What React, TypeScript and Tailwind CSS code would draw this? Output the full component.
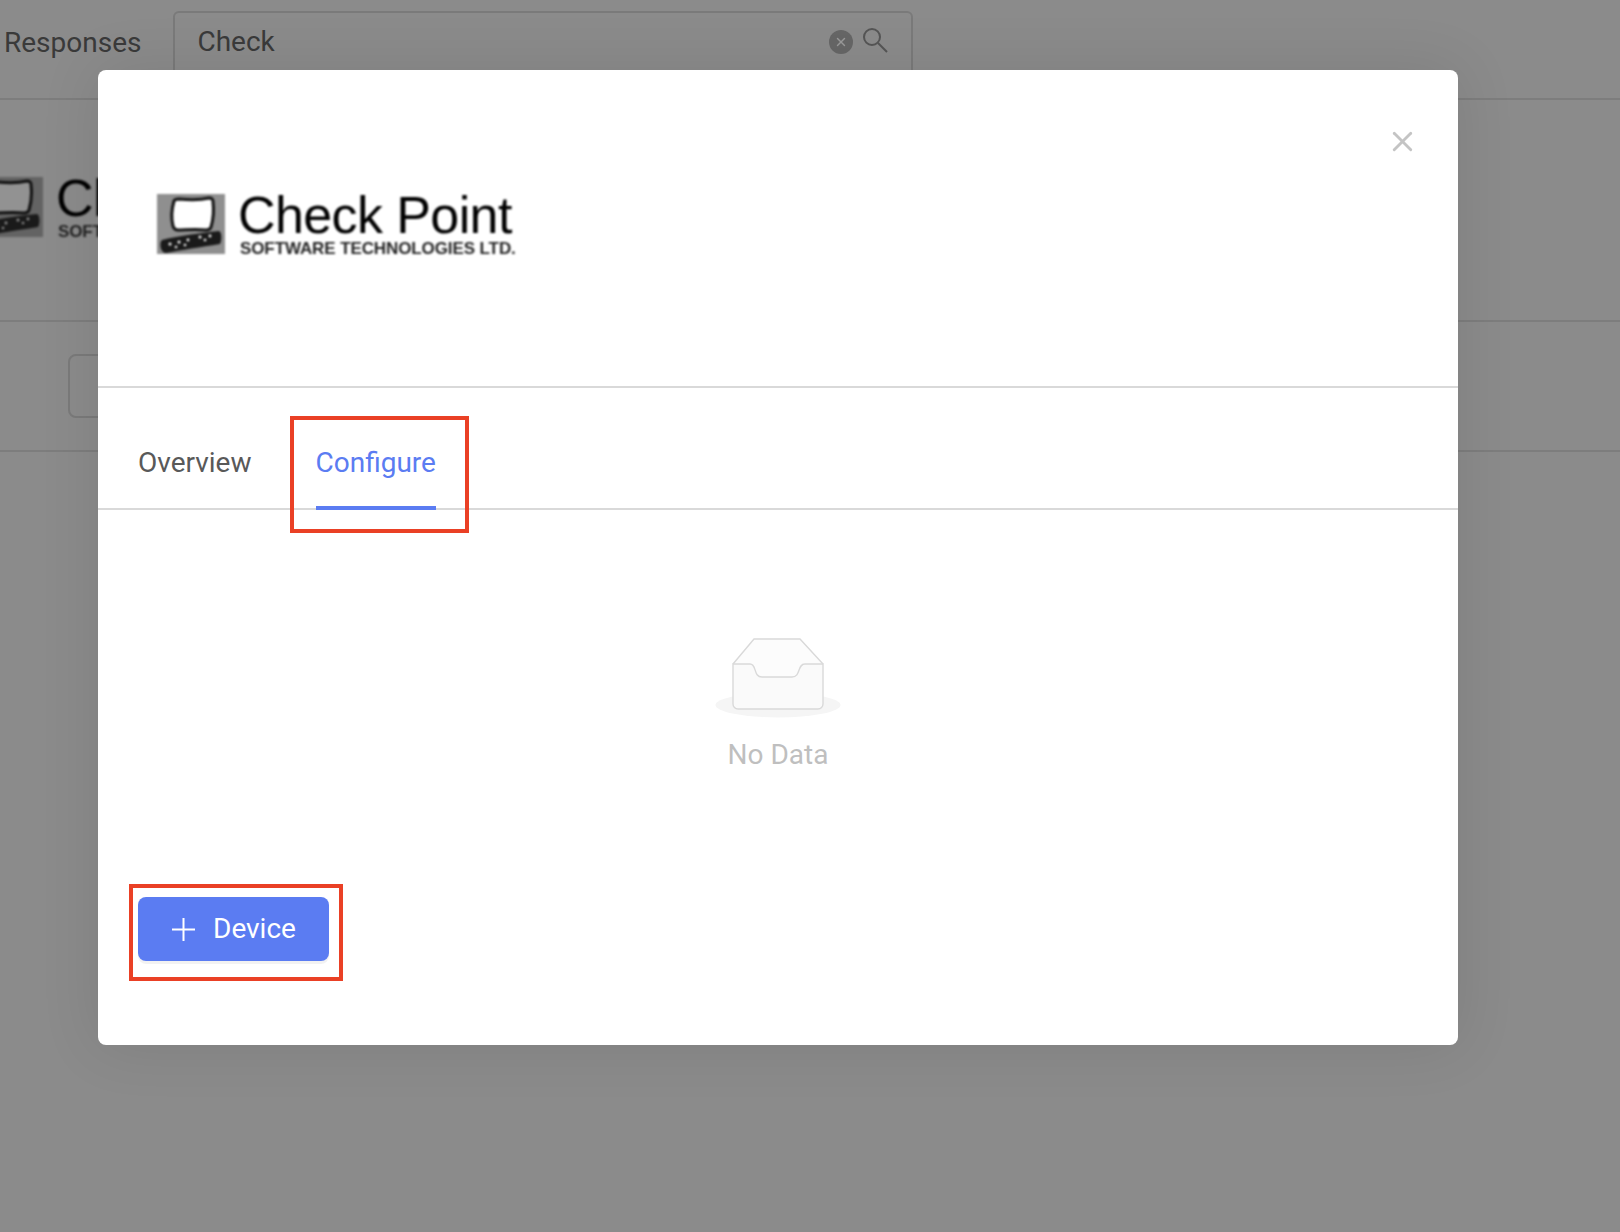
import { X } from "lucide-react";

function CheckPointLogo({ dimmed = false }: { dimmed?: boolean }) {
  return (
    <div className="flex items-start gap-[13px] blur-[0.8px]">
      <svg width="68" height="60" viewBox="0 0 68 60" className="shrink-0">
        <rect width="68" height="60" fill={dimmed ? "#636363" : "#8f8f8f"} />
        <path
          d="M17 7 C18 5 20 5 22 5 C32 6 44 6 52 4 C55 4 56 5 56 8 C57 16 56 26 54 33 C53 36 51 36 49 36 C38 35 28 36 21 36 C18 36 17 35 16 32 C14 24 15 14 17 7 Z"
          fill={dimmed ? "#929292" : "#ffffff"}
          stroke="#111111"
          strokeWidth="3"
        />
        <path d="M5 46 C20 42 44 39 62 37 C65 38 65 47 63 50 C44 53 24 56 9 59 C3 59 2 48 5 46 Z" fill="#1a1a1a" />
        <g fill={dimmed ? "#929292" : "#ffffff"}>
          <circle cx="13" cy="50" r="1.5" />
          <circle cx="19" cy="53" r="1.3" />
          <circle cx="22" cy="48" r="1.5" />
          <circle cx="28" cy="51" r="1.3" />
          <circle cx="31" cy="46" r="1.4" />
          <circle cx="43" cy="43" r="1.5" />
          <circle cx="48" cy="46" r="1.3" />
          <circle cx="53" cy="42" r="1.4" />
          <circle cx="36" cy="29" r="1.4" />
          <circle cx="46" cy="27" r="1.5" />
          <circle cx="26" cy="32" r="1.1" />
        </g>
      </svg>
      <div className="-mt-[4px] font-['Liberation_Sans',sans-serif] text-black">
        <div className="text-[52px] leading-[50px] tracking-[-0.6px] whitespace-nowrap">
          Check Point
        </div>
        <div className="ml-[2px] text-[17px] leading-[18px] font-bold tracking-[-0.1px] whitespace-nowrap text-[#222222]">
          SOFTWARE TECHNOLOGIES LTD.
        </div>
      </div>
    </div>
  );
}

function EmptyBox() {
  return (
    <svg width="126" height="81" viewBox="0 0 126 81">
      <ellipse cx="63" cy="67" rx="62.5" ry="12.5" fill="#f5f5f5" />
      <path d="M18 26 L39 1 H85 L108 26 V66 A5 5 0 0 1 103 71 H23 A5 5 0 0 1 18 66 Z" fill="#fcfcfc" />
      <path d="M18 26 L39 1 H85 L108 26" fill="none" stroke="#d9d9d9" strokeWidth="1.4" />
      <path
        d="M18 26 H35 C42 26 38 39 47 39 H77 C86 39 82 26 90 26 H108 V66 A5 5 0 0 1 103 71 H23 A5 5 0 0 1 18 66 Z"
        fill="#fafafa"
        stroke="#d9d9d9"
        strokeWidth="1.4"
      />
    </svg>
  );
}

export default function App() {
  return (
    <div className="relative h-[1232px] w-[1620px] overflow-hidden bg-[#8b8b8b] font-['Roboto',sans-serif]">
      {/* Page behind the overlay */}
      <div className="flex h-[100px] items-start border-b-2 border-[#7d7d7d]">
        <span className="mt-[25px] ml-[4px] text-[28px] leading-[36px] text-[#3a3a3a]">Responses</span>
        <div className="mt-[11px] ml-[32px] flex h-[80px] w-[740px] items-start rounded-[6px] border-2 border-[#7a7a7a] pt-[11px] pr-[23px] pl-[22px]">
          <span className="flex-1 text-[28px] leading-[36px] text-[#3a3a3a]">Check</span>
          <div className="mt-[6px] flex h-[24px] w-[24px] items-center justify-center rounded-full bg-[#666666]">
            <X className="h-[14px] w-[14px] text-[#9a9a9a]" strokeWidth={2.5} />
          </div>
          <svg
            width="25"
            height="25"
            viewBox="0 0 25 25"
            fill="none"
            stroke="#555555"
            strokeWidth="2"
            className="mt-[4px] ml-[10px]"
          >
            <circle cx="9" cy="9" r="8" />
            <path d="M15 15 L24 24" />
          </svg>
        </div>
      </div>
      <div className="h-[222px] border-b-2 border-[#7d7d7d] pt-[77px]">
        <div className="-ml-[25px]">
          <CheckPointLogo dimmed />
        </div>
      </div>
      <div className="h-[130px] border-b-2 border-[#7d7d7d] pt-[32px] pl-[68px]">
        <div className="h-[64px] w-[200px] rounded-[8px] border-2 border-[#7a7a7a]" />
      </div>

      {/* Modal */}
      <div className="absolute top-[70px] left-[98px] flex h-[975px] w-[1360px] flex-col rounded-[8px] bg-white shadow-[0_0_60px_rgba(0,0,0,0.1)]">
        <div className="relative h-[318px] border-b-2 border-[#d9d9d9] pt-[124px] pl-[59px]">
          <CheckPointLogo />
          <X className="absolute top-[55px] right-[39px] h-[33px] w-[33px] text-[#c4c4c4]" strokeWidth={2.1} />
        </div>
        <div className="flex h-[122px] items-end gap-[64px] border-b-2 border-[#d9d9d9] pl-[40px]">
          <div className="-mb-[2px] h-[122px] pt-[57px] text-[28px] leading-[36px] text-[#595959]">Overview</div>
          <div className="-mb-[2px] h-[122px] border-b-[4px] border-[#5b7cf2] pt-[57px] text-[28px] leading-[36px] text-[#5b7cf2]">Configure</div>
        </div>
        <div className="flex flex-1 flex-col">
          <div className="mx-auto mt-[128px] flex flex-col items-center">
            <EmptyBox />
            <span className="mt-[18px] text-[28px] leading-[36px] text-[#bfbfbf]">No Data</span>
          </div>
          <button className="mt-[124px] ml-[40px] flex h-[64px] w-[191px] items-center gap-[18px] rounded-[8px] bg-[#5b7cf2] pl-[34px] text-[28px] text-white shadow-[0_3px_0_rgba(0,0,0,0.05)]">
            <svg width="23" height="23" viewBox="0 0 23 23" stroke="currentColor" strokeWidth="2">
              <path d="M11.5 0V23M0 11.5H23" />
            </svg>
            Device
          </button>
        </div>
      </div>

      {/* Red annotation boxes */}
      <div className="absolute top-[416px] left-[290px] h-[117px] w-[179px] border-[4px] border-[#ea4025]" />
      <div className="absolute top-[884px] left-[129px] h-[97px] w-[214px] border-[4px] border-[#ea4025]" />
    </div>
  );
}
